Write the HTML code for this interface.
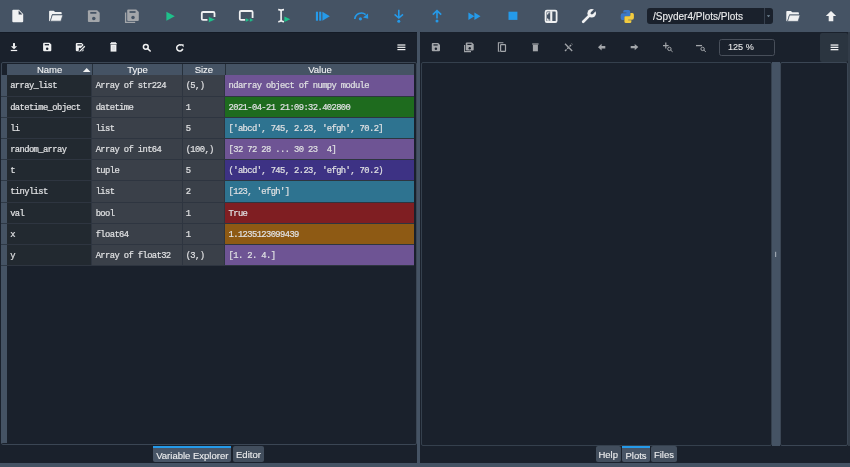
<!DOCTYPE html>
<html><head><meta charset="utf-8">
<style>
*{margin:0;padding:0;box-sizing:border-box}
html,body{width:850px;height:467px;overflow:hidden;background:#1a212c;font-family:"Liberation Sans",sans-serif;}
.a{position:absolute}
#tb{left:0;top:0;width:850px;height:32px;background:#455364}
#lp{left:0;top:32px;width:416.7px;height:431px;background:#1a212c}
#spl{left:416.7px;top:32px;width:3.8px;height:431px;background:#455364}
#rp{left:420.5px;top:32px;width:429.5px;height:431px;background:#1a212c}
#status{left:0;top:463.2px;width:850px;height:4px;background:#455364}
.tbl{left:0.5px;top:62.2px;width:416.2px;height:382.6px;border:1px solid #3b4654;border-radius:2px}
.vh{left:1.2px;top:75.4px;width:5.8px;height:367.4px;background:#455364}
.vr{position:absolute;left:1.2px;width:5.8px;height:21.19px;border-bottom:1.2px solid #2e3946}
.hdr{top:63.8px;height:11.6px;background:#455364;color:#E0E1E3;font-size:9.5px;line-height:11px;padding-top:0.4px;text-align:center;color:#F2F3F4;-webkit-text-stroke:0.1px #F2F3F4}
.c{position:absolute;height:20.19px;font-family:"Liberation Mono",monospace;font-size:8.8px;letter-spacing:-0.6px;color:#E0E1E3;line-height:20px;padding-left:3.2px;padding-top:1.1px;-webkit-text-stroke:0.2px #E0E1E3;white-space:pre;overflow:hidden}
.nm{background:#222930}
.ty{background:#3a4049}
.tt{padding-left:3.9px}
.tabs{font-size:9.5px;color:#EDEEEF;-webkit-text-stroke:0.12px #EDEEEF}
.tab{position:absolute;top:446px;height:16px;background:#424e5d;border-radius:2px;line-height:17px;text-align:center}
.tab.sel{background:#485566;border-top:2px solid #259AE9;border-radius:0 0 2px 2px;line-height:15px}
.combo{left:646.8px;top:7.9px;width:126.1px;height:16.3px;background:#1a212c;border-radius:3px;color:#EDEEEF;-webkit-text-stroke:0.12px #EDEEEF;font-size:10px;line-height:16.3px;padding-left:6.2px;padding-top:0.8px;white-space:nowrap;overflow:hidden}
.combo:after{content:"";position:absolute;left:117.2px;top:0;width:1px;height:16.3px;background:#37414F}
.zoombox{left:719.2px;top:38.8px;width:55.8px;height:17.3px;border:1px solid #484f5a;border-radius:2.5px;color:#E6E7E8;font-size:9.1px;line-height:15.4px;padding-left:7.8px;-webkit-text-stroke:0.1px #E6E7E8}
</style></head><body><div id="root" class="a" style="left:0;top:0;width:850px;height:467px;will-change:transform">
<div id="tb" class="a"></div>
<div id="lp" class="a"></div>
<div class="a" style="left:0;top:32px;width:850px;height:1px;background:#141b26"></div>
<div id="spl" class="a"></div>
<div id="rp" class="a"></div>
<div id="status" class="a"></div>

<div class="a combo">/Spyder4/Plots/Plots</div>

<!-- left pane table -->
<div class="a tbl"></div>
<div class="a vh"></div>
<div class="a" style="left:7px;top:75.4px;width:406.8px;height:190.71px;background:#2e3540"></div>
<div class="a" style="left:7px;top:63.8px;width:406.9px;height:11.6px;background:#27313c"></div>
<div class="a hdr" style="left:7px;width:85.1px">Name</div>
<div class="a hdr" style="left:93.2px;width:88.7px">Type</div>
<div class="a hdr" style="left:183px;width:41.8px">Size</div>
<div class="a hdr" style="left:226px;width:187.9px">Value</div>
<div class="vr" style="top:75.40px"></div>
<div class="c nm" style="top:75.40px;left:7px;width:83.8px">array_list</div>
<div class="c ty tt" style="top:75.40px;left:91.8px;width:89.8px">Array of str224</div>
<div class="c ty" style="top:75.40px;left:182.5px;width:41.3px">(5,)</div>
<div class="c" style="top:75.40px;left:225.4px;width:188.4px;background:#6E5494">ndarray object of numpy module</div>
<div class="vr" style="top:96.59px"></div>
<div class="c nm" style="top:96.59px;left:7px;width:83.8px">datetime_object</div>
<div class="c ty tt" style="top:96.59px;left:91.8px;width:89.8px">datetime</div>
<div class="c ty" style="top:96.59px;left:182.5px;width:41.3px">1</div>
<div class="c" style="top:96.59px;left:225.4px;width:188.4px;background:#1E6B1E">2021-04-21 21:09:32.402800</div>
<div class="vr" style="top:117.78px"></div>
<div class="c nm" style="top:117.78px;left:7px;width:83.8px">li</div>
<div class="c ty tt" style="top:117.78px;left:91.8px;width:89.8px">list</div>
<div class="c ty" style="top:117.78px;left:182.5px;width:41.3px">5</div>
<div class="c" style="top:117.78px;left:225.4px;width:188.4px;background:#2E7390">['abcd', 745, 2.23, 'efgh', 70.2]</div>
<div class="vr" style="top:138.97px"></div>
<div class="c nm" style="top:138.97px;left:7px;width:83.8px">random_array</div>
<div class="c ty tt" style="top:138.97px;left:91.8px;width:89.8px">Array of int64</div>
<div class="c ty" style="top:138.97px;left:182.5px;width:41.3px">(100,)</div>
<div class="c" style="top:138.97px;left:225.4px;width:188.4px;background:#6E5494">[32 72 28 ... 30 23  4]</div>
<div class="vr" style="top:160.16px"></div>
<div class="c nm" style="top:160.16px;left:7px;width:83.8px">t</div>
<div class="c ty tt" style="top:160.16px;left:91.8px;width:89.8px">tuple</div>
<div class="c ty" style="top:160.16px;left:182.5px;width:41.3px">5</div>
<div class="c" style="top:160.16px;left:225.4px;width:188.4px;background:#3D3284">('abcd', 745, 2.23, 'efgh', 70.2)</div>
<div class="vr" style="top:181.35px"></div>
<div class="c nm" style="top:181.35px;left:7px;width:83.8px">tinylist</div>
<div class="c ty tt" style="top:181.35px;left:91.8px;width:89.8px">list</div>
<div class="c ty" style="top:181.35px;left:182.5px;width:41.3px">2</div>
<div class="c" style="top:181.35px;left:225.4px;width:188.4px;background:#2E7390">[123, 'efgh']</div>
<div class="vr" style="top:202.54px"></div>
<div class="c nm" style="top:202.54px;left:7px;width:83.8px">val</div>
<div class="c ty tt" style="top:202.54px;left:91.8px;width:89.8px">bool</div>
<div class="c ty" style="top:202.54px;left:182.5px;width:41.3px">1</div>
<div class="c" style="top:202.54px;left:225.4px;width:188.4px;background:#7F1E22">True</div>
<div class="vr" style="top:223.73px"></div>
<div class="c nm" style="top:223.73px;left:7px;width:83.8px">x</div>
<div class="c ty tt" style="top:223.73px;left:91.8px;width:89.8px">float64</div>
<div class="c ty" style="top:223.73px;left:182.5px;width:41.3px">1</div>
<div class="c" style="top:223.73px;left:225.4px;width:188.4px;background:#8E5A14">1.1235123099439</div>
<div class="vr" style="top:244.92px"></div>
<div class="c nm" style="top:244.92px;left:7px;width:83.8px">y</div>
<div class="c ty tt" style="top:244.92px;left:91.8px;width:89.8px">Array of float32</div>
<div class="c ty" style="top:244.92px;left:182.5px;width:41.3px">(3,)</div>
<div class="c" style="top:244.92px;left:225.4px;width:188.4px;background:#6E5494">[1. 2. 4.]</div>

<div class="a tabs">
<div class="tab sel" style="left:153.2px;width:78.2px">Variable Explorer</div>
<div class="tab" style="left:233px;width:30.9px">Editor</div>
<div class="tab" style="left:595.5px;width:25.5px">Help</div>
<div class="tab sel" style="left:622px;width:28px">Plots</div>
<div class="tab" style="left:651.3px;width:25.4px">Files</div>
</div>

<!-- right pane -->
<div class="a" style="left:420.5px;top:62.2px;width:351.3px;height:383.6px;border:1px solid #35404d;border-radius:2px"></div>
<div class="a" style="left:771.6px;top:62.2px;width:8px;height:383.6px;background:#455364"></div>
<div class="a" style="left:779.6px;top:62.2px;width:68.6px;height:383.6px;border:1px solid #3b4654;border-radius:2px"></div>
<div class="a" style="left:848.2px;top:32px;width:1.8px;height:413.5px;background:#323c48"></div>
<div class="a" style="left:819.8px;top:32.7px;width:28.5px;height:28.9px;background:#2B3540;border-radius:2px"></div>
<div class="a zoombox">125 %</div>

<svg class="a" style="left:0;top:0" width="850" height="467" viewBox="0 0 850 467"><path d="M13.3,9.8 H19 L23.2,14 V21.2 Q23.2,22.2 22.2,22.2 H13.3 Q12.3,22.2 12.3,21.2 V10.8 Q12.3,9.8 13.3,9.8 Z" fill="#F0F1F2"/>
<path d="M18.6,10.6 L22.4,14.4 H18.6 Z" fill="#3a4656"/>
<g transform="translate(49.1,10.7) scale(1.0)"><path d="M0.8,0 H4.6 L6,1.4 H11.8 Q12.6,1.4 12.6,2.2 V3.6 H3 L0.9,10.5 Q0,10.5 0,9.7 V0.8 Q0,0 0.8,0 Z" fill="#F0F1F2"/><path d="M3.2,4.2 H13.8 L11.8,10.5 H1.2 Z" fill="#F0F1F2" stroke="#455364" stroke-width="0.7"/></g>
<path d="M88.9,10.2 H97.104 L99.7,12.796 V21 Q99.7,22 98.7,22 H88.9 Q87.9,22 87.9,21 V11.2 Q87.9,10.2 88.9,10.2 Z" fill="#A3A6AA"/><rect x="90.26" y="11.97" width="6.14" height="1.77" fill="#455364"/><circle cx="93.80" cy="18.46" r="1.77" fill="#455364"/>
<path d="M125.6,12.6 V22.4 H135.2" fill="none" stroke="#A3A6AA" stroke-width="1.3"/>
<path d="M128.2,9.4 H136.24800000000002 L138.8,11.952000000000002 V20 Q138.8,21 137.8,21 H128.2 Q127.2,21 127.2,20 V10.4 Q127.2,9.4 128.2,9.4 Z" fill="#A3A6AA"/><rect x="129.52" y="11.14" width="6.03" height="1.74" fill="#455364"/><circle cx="133.00" cy="17.52" r="1.74" fill="#455364"/>
<path d="M166.4,11.8 L174.8,16.3 L166.4,20.8 Z" fill="#1FC08B"/>
<path d="M207.5,19.9 H203 Q201.8,19.9 201.8,18.7 V13.2 Q201.8,12 203,12 H213.3 Q214.5,12 214.5,13.2 V17" fill="none" stroke="#F0F1F2" stroke-width="1.8"/>
<path d="M208.4,16.4 L215.8,19.6 L208.4,22.8 Z" fill="#1FC08B" stroke="#455364" stroke-width="0.8"/>
<path d="M245.5,19.9 H241 Q239.8,19.9 239.8,18.7 V12.2 Q239.8,11 241,11 H251.4 Q252.6,11 252.6,12.2 V18" fill="none" stroke="#F0F1F2" stroke-width="1.8"/>
<path d="M245.6,17.8 L249.8,20 L245.6,22.2 Z M249.6,17.8 L253.8,20 L249.6,22.2 Z" fill="#1FC08B" stroke="#455364" stroke-width="0.5"/>
<path d="M278.2,9.6 Q281.1,9.6 281.1,11.2 Q281.1,9.6 284,9.6 M281.1,11 V20.3 M278.2,21.7 Q281.1,21.7 281.1,20.1 Q281.1,21.7 284,21.7" fill="none" stroke="#F0F1F2" stroke-width="1.6"/>
<path d="M284.4,16.6 L290.3,19.3 L284.4,22 Z" fill="#1FC08B"/>
<rect x="315.9" y="11.7" width="2.1" height="9" fill="#259AE9"/><rect x="319.2" y="11.7" width="2.1" height="9" fill="#259AE9"/><path d="M322.4,11.7 L329.8,16.2 L322.4,20.7 Z" fill="#259AE9"/>
<path d="M354.8,19 A6.6,6.6 0 0 1 365.6,14.6" fill="none" stroke="#259AE9" stroke-width="1.7"/>
<path d="M363,17.6 L368.2,18.8 L368,13.6 Z" fill="#259AE9"/>
<circle cx="360.4" cy="18.8" r="1.6" fill="#259AE9"/>
<path d="M398.8,9.8 V17.2 M394.6,14.4 L398.8,18 L403,14.4" fill="none" stroke="#259AE9" stroke-width="1.6"/>
<circle cx="398.8" cy="21.3" r="1.5" fill="#259AE9"/>
<path d="M437,10.8 V18.6 M432.8,14.6 L437,10.6 L441.2,14.6" fill="none" stroke="#259AE9" stroke-width="1.6"/>
<circle cx="437" cy="21.1" r="1.5" fill="#259AE9"/>
<path d="M468.4,12.5 L474.4,16.2 L468.4,19.9 Z M474.4,12.5 L480.5,16.2 L474.4,19.9 Z" fill="#259AE9"/>
<rect x="508.5" y="11.7" width="8.9" height="8.2" fill="#259AE9"/>
<rect x="545.6" y="10.6" width="11" height="11.4" rx="1.3" fill="none" stroke="#F0F1F2" stroke-width="1.8"/>
<rect x="550.2" y="11.2" width="2.1" height="10.4" fill="#F0F1F2"/>
<path d="M549.6,12.7 H547.6 V14.4 M547.6,18.4 V20.1 H549.6" fill="none" stroke="#F0F1F2" stroke-width="1.1"/>
<path d="M583.2,21.8 L589.6,15.4" stroke="#F0F1F2" stroke-width="2.7" stroke-linecap="round"/>
<circle cx="591.7" cy="13.3" r="4.3" fill="#F0F1F2"/>
<g transform="translate(591.9,13.1) rotate(-45)"><rect x="0" y="-1.35" width="6" height="2.7" fill="#455364"/><circle cx="0" cy="0" r="1.35" fill="#455364"/></g>
<path d="M624.6,9.9 H628.6 Q630.2,9.9 630.2,11.5 V15.6 Q630.2,16.6 629.2,16.6 H625.4 Q624.2,16.6 624.2,17.8 V20 H622.2 Q620.7,20 620.7,18.2 V15.2 Q620.7,13.2 622.6,13.2 H626.4 V12.6 H623.2 V11.4 Q623.2,9.9 624.6,9.9 Z" fill="#3C78C8"/>
<path d="M630.0,23 H626 Q624.4,23 624.4,21.4 V17.3 Q624.4,16.3 625.4,16.3 H629.2 Q630.4,16.3 630.4,15.1 V12.9 H632.4 Q633.9,12.9 633.9,14.7 V17.7 Q633.9,19.7 632,19.7 H628.2 V20.3 H631.4 V21.5 Q631.4,23 630.0,23 Z" fill="#F2CB3F"/>
<g transform="translate(786.3,10.9) scale(1.0)"><path d="M0.8,0 H4.6 L6,1.4 H11.8 Q12.6,1.4 12.6,2.2 V3.6 H3 L0.9,10.5 Q0,10.5 0,9.7 V0.8 Q0,0 0.8,0 Z" fill="#F0F1F2"/><path d="M3.2,4.2 H13.8 L11.8,10.5 H1.2 Z" fill="#F0F1F2" stroke="#455364" stroke-width="0.7"/></g>
<path d="M831,10.9 L836.2,16.1 H833.3 V21.3 H828.7 V16.1 H825.8 Z" fill="#F0F1F2"/>
<path d="M766.8,15.2 L770.2,15.2 L768.5,17.2 Z" fill="#788D9C"/>
<rect x="13" y="43.1" width="2" height="3.6" fill="#F0F1F2"/><path d="M10.9,46.2 H17.1 L14,49.3 Z" fill="#F0F1F2"/><rect x="10.8" y="49.9" width="6.4" height="1.2" fill="#F0F1F2"/>
<path d="M44.1,42.8 H49.495999999999995 L51.3,44.604 V50.3 Q51.3,51.3 50.3,51.3 H44.1 Q43.1,51.3 43.1,50.3 V43.8 Q43.1,42.8 44.1,42.8 Z" fill="#F0F1F2"/><rect x="44.74" y="44.07" width="4.26" height="1.27" fill="#1a212c"/><circle cx="47.20" cy="48.75" r="1.23" fill="#1a212c"/>
<path d="M76.8,43.1 H81.8 L83.6,44.9 V50.3 Q83.6,51.3 82.6,51.3 H76.8 Q75.8,51.3 75.8,50.3 V44.1 Q75.8,43.1 76.8,43.1 Z" fill="#F0F1F2"/>
<rect x="77.4" y="44.3" width="4.4" height="1.2" fill="#1a212c"/><circle cx="79.8" cy="48.9" r="1.1" fill="#1a212c"/>
<path d="M79.4,51.4 L84.8,46" stroke="#1a212c" stroke-width="2.8"/><path d="M80,51.1 L84.8,46.3" stroke="#F0F1F2" stroke-width="1.3"/><path d="M79.3,51.6 L80.2,50.7" stroke="#F0F1F2" stroke-width="0.8"/>
<path d="M110,43.8 H117 M111,42.8 H116" stroke="#F0F1F2" stroke-width="1.1"/><path d="M110.6,44.6 H116.4 V51.6 H110.6 Z" fill="#F0F1F2"/><rect x="112" y="46" width="3" height="4.2" fill="#dde0e3"/>
<circle cx="145.8" cy="46.8" r="2.4" fill="none" stroke="#F0F1F2" stroke-width="1.5"/><path d="M147.6,48.6 L150.2,51" stroke="#F0F1F2" stroke-width="1.6" stroke-linecap="round"/>
<path d="M182.8,48.8 A3.1,3.1 0 1 1 181.6,45.4" fill="none" stroke="#F0F1F2" stroke-width="1.5"/><path d="M180.6,44.2 H183.6 V47.2 Z" fill="#F0F1F2"/>
<rect x="397.4" y="44.4" width="8" height="1.2" fill="#F0F1F2"/><rect x="397.4" y="46.7" width="8" height="1.2" fill="#F0F1F2"/><rect x="397.4" y="49" width="8" height="1.2" fill="#F0F1F2"/>
<path d="M432.8,43.1 H438.196 L440,44.903999999999996 V50.3 Q440,51.3 439,51.3 H432.8 Q431.8,51.3 431.8,50.3 V44.1 Q431.8,43.1 432.8,43.1 Z" fill="#A3A6AA"/><rect x="433.44" y="44.33" width="4.26" height="1.23" fill="#1a212c"/><circle cx="435.90" cy="48.84" r="1.23" fill="#1a212c"/>
<path d="M464.6,45 V51.6 H471" fill="none" stroke="#A3A6AA" stroke-width="1.1"/>
<path d="M466.8,42.6 H471.962 L473.7,44.337999999999994 V49.6 Q473.7,50.6 472.7,50.6 H466.8 Q465.8,50.6 465.8,49.6 V43.6 Q465.8,42.6 466.8,42.6 Z" fill="#A3A6AA"/><rect x="467.38" y="43.80" width="4.11" height="1.20" fill="#1a212c"/><circle cx="469.75" cy="48.20" r="1.18" fill="#1a212c"/>
<path d="M499.6,51.2 H498.4 V42.8 H503.4" fill="none" stroke="#A3A6AA" stroke-width="1.1"/><rect x="500.6" y="44.6" width="4.9" height="6.8" rx="0.6" fill="none" stroke="#A3A6AA" stroke-width="1.2"/>
<path d="M532.2,44 H538.6" stroke="#A3A6AA" stroke-width="1.2"/><rect x="532.9" y="44.8" width="5" height="6.5" fill="#A3A6AA"/>
<path d="M565,43.8 L572.2,51" stroke="#A3A6AA" stroke-width="1.3"/><path d="M565,51 L572.2,43.8" stroke="#A3A6AA" stroke-width="1.3" stroke-dasharray="2.2,1"/>
<path d="M598,47.2 L601.6,43.8 V45.9 H605.3 V48.5 H601.6 V50.6 Z" fill="#A3A6AA"/>
<path d="M638.3,47.1 L634.7,44 V46 H630.7 V48.3 H634.7 V50.2 Z" fill="#A3A6AA"/>
<path d="M663,45.6 H668.6 M665.8,42.4 V48.6" stroke="#A3A6AA" stroke-width="1.2"/><circle cx="669.4" cy="48.9" r="1.7" fill="none" stroke="#A3A6AA" stroke-width="1"/><path d="M670.6,50.1 L672.6,51.8" stroke="#A3A6AA" stroke-width="1"/>
<path d="M696,45.6 H702" stroke="#A3A6AA" stroke-width="1.3"/><circle cx="702.6" cy="48.9" r="1.7" fill="none" stroke="#A3A6AA" stroke-width="1"/><path d="M703.8,50.1 L705.8,51.8" stroke="#A3A6AA" stroke-width="1"/>
<rect x="830.6" y="44.4" width="7.8" height="1.3" fill="#F0F1F2"/><rect x="830.6" y="46.7" width="7.8" height="1.3" fill="#F0F1F2"/><rect x="830.6" y="49" width="7.8" height="1.3" fill="#F0F1F2"/>
<path d="M82.9,72 L86.7,68 L90.5,72 Z" fill="#F0F1F2"/>
<rect x="775" y="251.8" width="1.2" height="5.2" fill="#9aa3ad"/></svg>
</div></body></html>
